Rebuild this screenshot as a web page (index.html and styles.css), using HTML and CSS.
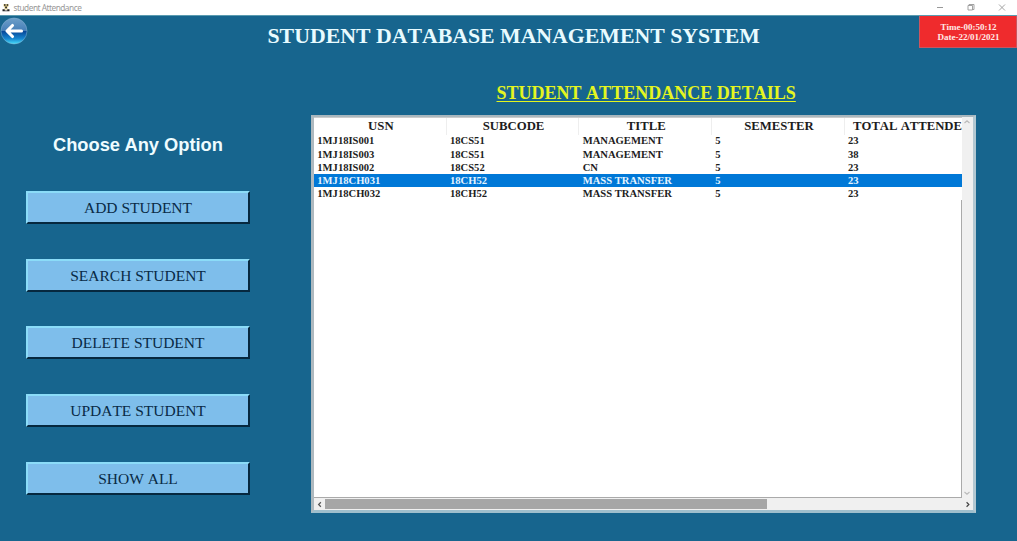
FILE: index.html
```html
<!DOCTYPE html>
<html lang="en">
<head>
<meta charset="utf-8">
<title>student Attendance</title>
<link rel="stylesheet" href="styles.css">
</head>
<body>
<div class="titlebar">
  <svg class="app-icon" viewBox="0 0 8 8"><path d="M1.500 0h5v2.200L5 4l1.500 1.500h-5L3 4 1.500 2.200z" fill="#e3cf8c"/><path d="M2 .3h1.500v1.500H2zM4.700.3h1.500v1.500H4.700zM3.200 2.500h1.700v1.800H3.200z" fill="#222"/><path d="M.5 5.300h2.200v2H.5zM5.300 5.300h2.200v2H5.300zM2.700 6.500h2.600v.8H2.700z" fill="#222"/></svg>
  <span class="caption">student Attendance</span>
  <svg class="window-controls" viewBox="0 0 80 15" fill="none" stroke="#999"><path d="M0 7.500h6"/><path d="M31 5.500h4.500V10H31zM32 5.500V4.500H37V9.500h-1.500M62 4.500l6 6M68 4.500l-6 6" stroke-width=".9"/></svg>
</div>
<header class="banner">
  <button class="back" aria-label="Back">
    <svg viewBox="0 0 28 28">
      <defs>
        <linearGradient id="orb" x1="0" y1="0" x2="0" y2="1"><stop offset="0" stop-color="#6d9fc9"/><stop offset=".48" stop-color="#477fb8"/><stop offset=".52" stop-color="#07499a"/><stop offset=".8" stop-color="#1687d0"/><stop offset="1" stop-color="#4be0fa"/></linearGradient>
      </defs>
      <circle cx="14" cy="14.500" r="13" fill="url(#orb)" stroke="#8bb6d4" stroke-opacity=".6" stroke-width=".8"/>
      <path d="M12.500 9L7 14.500l5.500 5.500M7.500 14.500h14" fill="none" stroke="#fff" stroke-width="3.100" stroke-linecap="round" stroke-linejoin="round"/>
    </svg>
  </button>
  <h1 class="system-title">STUDENT DATABASE MANAGEMENT SYSTEM</h1>
  <div class="clock"><span>Time-00:50:12</span><span>Date-22/01/2021</span></div>
</header>
<main class="content">
  <nav class="options">
    <h2 class="options-title">Choose Any Option</h2>
    <button class="option">ADD STUDENT</button>
    <button class="option">SEARCH STUDENT</button>
    <button class="option">DELETE STUDENT</button>
    <button class="option">UPDATE STUDENT</button>
    <button class="option">SHOW ALL</button>
  </nav>
  <section class="details">
    <h2 class="details-title">STUDENT ATTENDANCE DETAILS</h2>
    <div class="frame">
      <div class="table">
        <div class="row head"><span>USN</span><span>SUBCODE</span><span>TITLE</span><span>SEMESTER</span><span class="clipped">TOTAL ATTENDE</span></div>
        <div class="row"><span>1MJ18IS001</span><span>18CS51</span><span>MANAGEMENT</span><span>5</span><span>23</span></div>
        <div class="row"><span>1MJ18IS003</span><span>18CS51</span><span>MANAGEMENT</span><span>5</span><span>38</span></div>
        <div class="row"><span>1MJ18IS002</span><span>18CS52</span><span>CN</span><span>5</span><span>23</span></div>
        <div class="row selected"><span>1MJ18CH031</span><span>18CH52</span><span>MASS TRANSFER</span><span>5</span><span>23</span></div>
        <div class="row"><span>1MJ18CH032</span><span>18CH52</span><span>MASS TRANSFER</span><span>5</span><span>23</span></div>
        <div class="blank"></div>
      </div>
      <div class="vscroll">
        <svg viewBox="0 0 10 10"><path d="M2.500 6L5 3.800 7.500 6" fill="none" stroke="#bbb" stroke-width="1.200"/></svg>
        <svg viewBox="0 0 10 10"><path d="M2.500 4L5 6.200 7.500 4" fill="none" stroke="#bbb" stroke-width="1.200"/></svg>
      </div>
      <div class="hscroll">
        <svg viewBox="0 0 12 11"><path d="M7.500 3L5 5.500 7.500 8" fill="none" stroke="#555" stroke-width="1.300"/></svg>
        <div class="thumb"></div>
        <svg viewBox="0 0 12 11"><path d="M5 3l2.500 2.500L5 8" fill="none" stroke="#444" stroke-width="1.300"/></svg>
      </div>
    </div>
  </section>
</main>
</body>
</html>
```
FILE: styles.css
```css
* { box-sizing: border-box; }
body {
  margin: 0;
  height: 541px;
  overflow: hidden;
  background: #17658e;
  font-family: "Liberation Serif", "Times New Roman", serif;
  font-kerning: none;
}
h1, h2 { margin: 0; white-space: nowrap; }
button { padding: 0; border: 0; background: none; font: inherit; font-kerning: none; }

.titlebar {
  display: flex;
  align-items: center;
  height: 15px;
  padding-left: 2px;
  background: #fff;
}
.app-icon { width: 8px; height: 8px; }
.caption {
  margin-left: 3.500px;
  font: 8.300px/14px "Noto Sans", sans-serif;
  letter-spacing: -.5px;
  color: #999;
  white-space: nowrap;
}
.window-controls { width: 80px; height: 15px; margin-left: auto; }

.banner {
  display: flex;
  align-items: flex-start;
  height: 53px;
  border-top: 1px solid #5a9bb0;
}
.back { width: 28px; height: 29px; }
.back svg { display: block; width: 28px; height: 29px; }
.system-title {
  margin-left: 239.500px;
  padding-top: 7px;
  font-size: 21.800px;
  line-height: 26px;
  color: #e8fbff;
}
.clock {
  display: flex;
  flex-direction: column;
  align-items: center;
  width: 98px;
  height: 32px;
  margin-left: auto;
  padding: 6px 0 0 1px;
  border: 1px solid #c95660;
  border-top: 0;
  background: #ef2b2d;
  color: #ffe9e6;
  font-size: 9px;
  font-weight: bold;
  line-height: 10px;
}

.content { display: flex; align-items: flex-start; }
.options {
  display: flex;
  flex-direction: column;
  width: 224px;
  margin-left: 26px;
  padding-top: 65px;
  gap: 34.700px;
}
.options-title {
  margin: 0 0 -.7px 27px;
  font: bold 18.300px/24px "Liberation Sans", Arial, sans-serif;
  color: #effcff;
}
.option {
  height: 33px;
  border: solid;
  border-width: 2px;
  border-color: #8bdcf8 #06283f #06283f #8bdcf8;
  background: #7ebeeb;
  color: #092a45;
  font-size: 15.500px;
  line-height: 29px;
}

.details { width: 665px; margin-left: 61px; padding-top: 13px; }
.details-title {
  margin-left: 185.500px;
  font-size: 18.030px;
  line-height: 24px;
  color: #e4f51f;
  text-decoration: underline;
  text-decoration-thickness: 1px;
  text-underline-offset: 2px;
}
.frame {
  display: grid;
  grid-template: 381px 12px / 648px 11px;
  height: 398px;
  margin-top: 10px;
  border: 2px solid #a9b7be;
  border-right: 3px solid #b3c8d2;
  border-bottom: 3px solid #9fbfcd;
  border-left: 3px solid #aeb9bf;
  background: #f0f0f0;
}
.table {
  display: flex;
  flex-direction: column;
  overflow: hidden;
  border-top: 1px solid #ccc;
  background: #fff;
  color: #1d1d1d;
  font-weight: bold;
  font-size: 10.600px;
}
.row {
  display: grid;
  grid-template-columns: repeat(4, 132.700px) 1fr;
  flex: none;
  height: 13.200px;
  line-height: 13px;
  white-space: nowrap;
}
.row span { padding-left: 3.300px; }
.head { height: 16.400px; font-size: 12.750px; line-height: 17px; text-align: center; }
.head span { padding: 0 0 0 2px; border-right: 1px solid #eee; }
.head .clipped { padding: 0; border: 0; text-align: right; font-size: 12.700px; }
.selected { background: #0078d7; color: #e4f4ff; }
.blank { flex: 1; border-right: 1px solid #aaa; border-bottom: 1px solid #aaa; }
.vscroll { display: flex; flex-direction: column; justify-content: space-between; }
.vscroll svg { width: 10px; height: 10px; }
.hscroll { grid-column: 1 / -1; display: flex; align-items: center; }
.hscroll svg { width: 11px; height: 11px; flex: none; }
.hscroll svg:last-child { margin-left: auto; }
.thumb { width: 442px; height: 10px; background: #a6a6a6; }
```
